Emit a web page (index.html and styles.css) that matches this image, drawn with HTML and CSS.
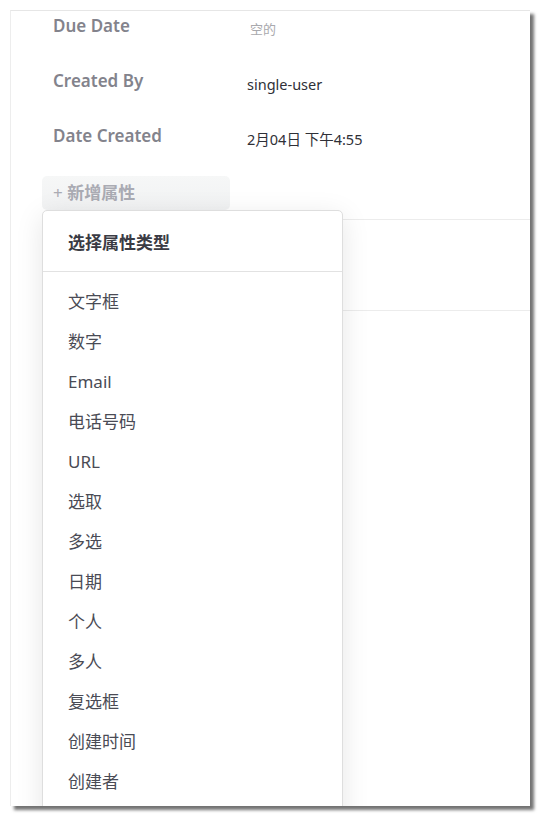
FILE: index.html
```html
<!DOCTYPE html>
<html lang="zh">
<head>
<meta charset="utf-8">
<title>属性</title>
<link rel="stylesheet" href="styles.css">
</head>
<body>
<div class="window">
  <div class="props">
    <div class="row">
      <div class="label">Due Date</div>
      <div class="value empty">空的</div>
    </div>
    <div class="row">
      <div class="label">Created By</div>
      <div class="value">single-user</div>
    </div>
    <div class="row">
      <div class="label">Date Created</div>
      <div class="value">2月04日 下午4:55</div>
    </div>
    <div class="add-wrap">
      <button class="add-btn"><span class="plus">+</span> 新增属性</button>
      <div class="menu">
        <div class="menu-head">选择属性类型</div>
        <ul class="menu-list">
          <li>文字框</li>
          <li>数字</li>
          <li>Email</li>
          <li>电话号码</li>
          <li>URL</li>
          <li>选取</li>
          <li>多选</li>
          <li>日期</li>
          <li>个人</li>
          <li>多人</li>
          <li>复选框</li>
          <li>创建时间</li>
          <li>创建者</li>
        </ul>
      </div>
    </div>
  </div>
  <div class="section"></div>
  <div class="section"></div>
</div>
</body>
</html>
```

FILE: styles.css
```css
* { box-sizing: border-box; }
html, body { margin: 0; padding: 0; background: #ffffff; }
body {
  font-family: "Noto Sans", "Noto Sans CJK SC", sans-serif;
  padding: 10px 11px 11px 10px;
}
.window {
  position: relative;
  width: 520px;
  height: 796px;
  background: #ffffff;
  border-top: 1px solid #e6e6e6;
  border-left: 1px solid #ededed;
  box-shadow: 4px 4px 3px rgba(0, 0, 0, 0.55);
  overflow: hidden;
}
.props {
  margin-top: -12px;
  padding-left: 42px;
}
.row {
  display: flex;
  align-items: center;
  height: 55px;
}
.label {
  width: 193px;
  font-size: 17px;
  font-weight: 600;
  color: #83838c;
  line-height: 24px;
  margin-top: -1px;
}
.value {
  font-size: 14.5px;
  color: #2f3037;
  line-height: 20px;
  margin-top: 5px;
  margin-left: 1px;
}
.value.empty {
  font-size: 13px;
  color: #a9a9ad;
  margin-left: 4px;
}
.add-wrap {
  position: relative;
  margin-left: -11px;
  margin-top: 12px;
}
.add-btn {
  display: block;
  width: 188px;
  height: 34px;
  border: none;
  border-radius: 5px;
  background: linear-gradient(#f6f7f7, #f1f2f3);
  font-family: inherit;
  font-size: 17px;
  font-weight: 700;
  color: #aaabb3;
  text-align: left;
  padding: 0 0 0 11px;
  line-height: 32px;
}
.plus { font-weight: 400; }
.menu {
  position: absolute;
  top: 34px;
  left: 0;
  width: 301px;
  height: 620px;
  background: #ffffff;
  border: 1px solid #dedede;
  border-radius: 5px;
  box-shadow: 0 6px 28px rgba(0, 0, 0, 0.10);
  z-index: 2;
}
.menu-head {
  height: 61px;
  padding-left: 25px;
  display: flex;
  align-items: center;
  font-size: 17px;
  font-weight: 700;
  color: #3a3b44;
  border-bottom: 1px solid #e2e2e2;
}
.menu-list {
  list-style: none;
  margin: 0;
  padding: 10px 0 0 0;
}
.menu-list li {
  height: 40px;
  line-height: 40px;
  padding-left: 25px;
  font-size: 17px;
  color: #4a4b55;
}
.section {
  margin-left: 32px;
  height: 91px;
  border-top: 1px solid #ececec;
}
.props + .section { margin-top: 9px; }
```
